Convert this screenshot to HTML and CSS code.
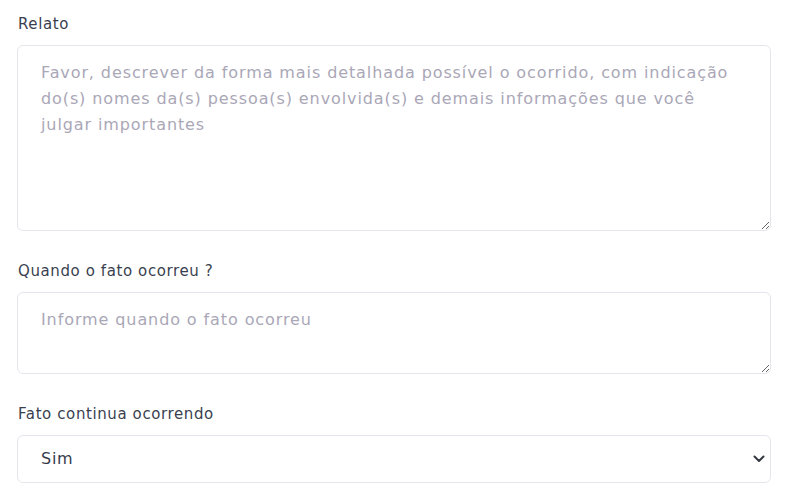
FILE: index.html
```
<!DOCTYPE html>
<html lang="pt-BR">
<head>
<meta charset="utf-8">
<link rel="stylesheet" href="styles.css">
</head>
<body>
<form class="form">
  <div class="group">
    <label class="label" for="relato">Relato</label>
    <textarea id="relato" class="field area-lg" placeholder="Favor, descrever da forma mais detalhada possível o ocorrido, com indicação do(s) nomes da(s) pessoa(s) envolvida(s) e demais informações que você julgar importantes"></textarea>
  </div>
  <div class="group">
    <label class="label" for="quando">Quando o fato ocorreu ?</label>
    <textarea id="quando" class="field area-sm" placeholder="Informe quando o fato ocorreu"></textarea>
  </div>
  <div class="group">
    <label class="label" for="continua">Fato continua ocorrendo</label>
    <select id="continua" class="field select">
      <option>Sim</option>
      <option>Não</option>
    </select>
  </div>
</form>
</body>
</html>
```
FILE: styles.css
```
html, body {
  margin: 0;
  padding: 0;
  background: #fff;
}
body {
  font-family: "DejaVu Sans", "Open Sans", sans-serif;
  color: #363b4c;
}
.form {
  display: flex;
  flex-direction: column;
  gap: 29px;
  padding: 13px 36px 0 17px;
}
.group {
  display: flex;
  flex-direction: column;
}
.label {
  font-size: 15px;
  line-height: 22px;
  letter-spacing: 0.6px;
  margin: 0 0 10px 1px;
  color: #3a3f50;
}
.field {
  box-sizing: border-box;
  width: 100%;
  border: 1px solid #e4e6eb;
  border-radius: 6px;
  background: #fff;
  font-family: inherit;
  font-size: 16px;
  line-height: 26px;
  letter-spacing: 0.9px;
  color: #363b4c;
  padding: 14px 35px 14px 23px;
  margin: 0;
  outline: none;
}
.field::placeholder {
  color: #aaa7b7;
  opacity: 1;
}
.area-lg {
  height: 186px;
  resize: vertical;
}
.area-sm {
  height: 82px;
  resize: vertical;
}
.select {
  height: 48px;
  padding: 10px 23px;
  letter-spacing: 0.75px;
  appearance: none;
  -webkit-appearance: none;
  background-image: url("data:image/svg+xml,%3Csvg xmlns='http://www.w3.org/2000/svg' width='12' height='8' viewBox='0 0 12 8'%3E%3Cpath d='M1.5 1.5 6 6l4.5-4.5' fill='none' stroke='%23343a40' stroke-width='2' stroke-linecap='round' stroke-linejoin='round'/%3E%3C/svg%3E");
  background-repeat: no-repeat;
  background-position: right 5px center;
  background-size: 12px 8px;
}
```
